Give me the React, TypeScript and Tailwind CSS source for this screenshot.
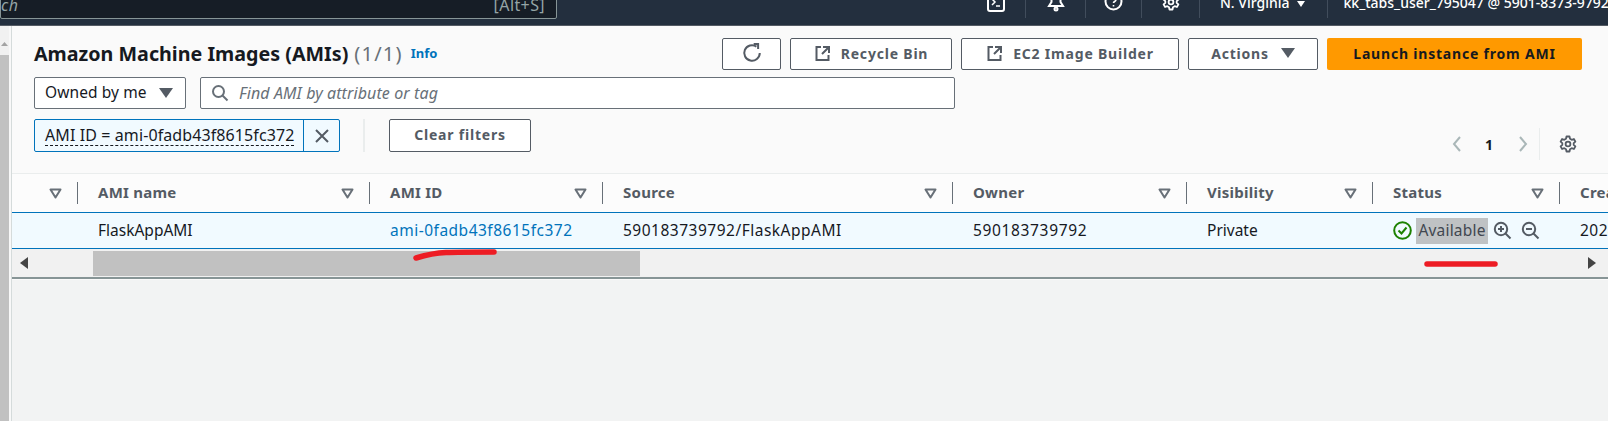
import type { ReactNode } from "react";

const columns = [
  { label: "", width: "w-[66px]", cell: "", tracking: "" },
  { label: "AMI name", width: "w-[292px]", cell: "FlaskAppAMI", tracking: "" },
  { label: "AMI ID", width: "w-[233px]", cell: "ami-0fadb43f8615fc372", tracking: "tracking-[0.5px]" },
  { label: "Source", width: "w-[350px]", cell: "590183739792/FlaskAppAMI", tracking: "tracking-[0.5px]" },
  { label: "Owner", width: "w-[234px]", cell: "590183739792", tracking: "tracking-[0.65px]" },
  { label: "Visibility", width: "w-[186px]", cell: "Private", tracking: "" },
  { label: "Status", width: "w-[187px]", cell: "", tracking: "" },
  { label: "Created", width: "w-[200px]", cell: "2024", tracking: "tracking-[0.5px]" },
];

function ExternalIcon() {
  return (
    <svg width="18" height="18" viewBox="0 0 18 18" fill="none" stroke="#545b64" strokeWidth="2">
      <path d="M7 3H2.500v13h12v-5" />
      <path d="M9 3h6v6M15 3L8 10" />
    </svg>
  );
}

function Caret() {
  return (
    <svg width="14" height="10" viewBox="0 0 14 10" fill="#545b64">
      <path d="M0 0h14L7 10z" />
    </svg>
  );
}

function SortIcon() {
  return (
    <svg width="13" height="11" viewBox="0 0 13 11" fill="none" stroke="#687078" strokeWidth="2" strokeLinejoin="round">
      <path d="M1.500 1.500h10L6.500 9.500z" />
    </svg>
  );
}

function GearIcon({ size, color }: { size: number; color: string }) {
  return (
    <svg width={size} height={size} viewBox="0 0 18 18" fill="none" stroke={color} strokeWidth="1.8" strokeLinejoin="round">
      <path d="M7.500 1.500h3l.5 2.300 1.700 1 2.200-.8 1.500 2.600-1.700 1.500v1.800l1.700 1.500-1.500 2.600-2.200-.8-1.700 1-.5 2.300h-3l-.5-2.300-1.700-1-2.200.8-1.500-2.600 1.700-1.500V8.100L1.600 6.600l1.500-2.600 2.200.8 1.700-1z" />
      <circle cx="9" cy="9" r="2.400" />
    </svg>
  );
}

function ZoomIcon({ plus }: { plus?: boolean }) {
  return (
    <svg width="19" height="19" viewBox="0 0 19 19" fill="none" stroke="#545b64" strokeWidth="2">
      <circle cx="8" cy="8" r="6.200" />
      <path d="M12.500 12.500L17.500 17.500" />
      <path d="M5 8h6" />
      {plus && <path d="M8 5v6" />}
    </svg>
  );
}

function Button({ children, className }: { children: ReactNode; className: string }) {
  return (
    <div className={`flex h-[32px] shrink-0 items-center justify-center rounded-[2px] border border-[#545b64] bg-white pb-[2px] text-[14px] font-bold tracking-[0.8px] whitespace-nowrap text-[#545b64] ${className}`}>
      {children}
    </div>
  );
}

function NavSep({ className }: { className: string }) {
  return <div className={`h-[18px] w-px bg-[#414d5c] ${className}`} />;
}

function TopNav() {
  return (
    <div className="flex h-[26px] overflow-hidden border-b border-[#545b64] bg-[#232f3e] text-white">
      <div className="-mt-[10px] flex h-[29px] w-[557px] shrink-0 items-center justify-between rounded-[2px] border border-[#879596] bg-[#161d26] pr-[11px] text-[16px] tracking-[0.4px] text-[#95a5a6]">
        <span className="italic">ch</span>
        <span>[Alt+S]</span>
      </div>
      <div className="flex flex-1 items-start pl-[429px]">
        <svg className="-mt-[5px]" width="20" height="18" viewBox="0 0 20 18" fill="none" stroke="#ffffff" strokeWidth="2">
          <rect x="2" y="1" width="16" height="15" rx="2" />
          <path d="M6 4l3 3-3 3M10 11h4" strokeWidth="1.500" />
        </svg>
        <NavSep className="ml-[19px]" />
        <svg className="ml-[21px] -mt-[7px]" width="18" height="19" viewBox="0 0 18 19" fill="none" stroke="#ffffff" strokeWidth="2">
          <path d="M9 1c3 0 4.500 2 4.500 5v3l2.500 4H2l2.500-4V6C4.500 3 6 1 9 1z" />
          <circle cx="9" cy="16" r="1.500" />
        </svg>
        <NavSep className="ml-[20px]" />
        <svg className="ml-[18px] -mt-[8px]" width="19" height="19" viewBox="0 0 19 19" fill="none" stroke="#ffffff" strokeWidth="2">
          <circle cx="9.500" cy="9.500" r="8" />
          <path d="M7 7.500c0-3 5-3 5 0 0 2-2.500 2-2.500 3.500M9.500 13v1.500" strokeWidth="1.600" />
        </svg>
        <NavSep className="ml-[18px]" />
        <div className="ml-[20px] -mt-[7px]">
          <GearIcon size={18} color="#ffffff" />
        </div>
        <NavSep className="ml-[19px]" />
        <span className="-mt-[8px] ml-[20px] text-[14px] font-medium whitespace-nowrap">N. Virginia</span>
        <svg className="ml-[7px] mt-[1px]" width="8" height="6" viewBox="0 0 8 6" fill="#ffffff">
          <path d="M0 0h8L4 6z" />
        </svg>
        <NavSep className="ml-[22px]" />
        <span className="-mt-[8px] ml-[16px] text-[14px] font-medium whitespace-nowrap">kk_tabs_user_795047 @ 5901-8373-9792</span>
      </div>
    </div>
  );
}

function HeaderRow() {
  return (
    <div className="flex items-start">
      <div className="flex h-[32px] w-[710px] shrink-0 items-center pl-[22px]">
        <h1 className="text-[19.7px] font-bold whitespace-nowrap text-[#16191f]">Amazon Machine Images (AMIs)</h1>
        <span className="ml-[6px] text-[20px] tracking-[1.2px] text-[#687078]">(1/1)</span>
        <span className="ml-[8px] text-[13px] font-bold text-[#0073bb]">Info</span>
      </div>
      <div className="flex gap-[9px]">
        <Button className="w-[59px]">
          <svg width="20" height="20" viewBox="0 0 18 18" fill="none" stroke="#545b64" strokeWidth="1.800">
            <path d="M13 3.200A7 7 0 1 0 16 9" />
            <path d="M10.500 1h4v4.500" />
          </svg>
        </Button>
        <Button className="w-[162px] gap-[9px]">
          <ExternalIcon />
          Recycle Bin
        </Button>
        <Button className="w-[218px] gap-[9px]">
          <ExternalIcon />
          EC2 Image Builder
        </Button>
        <Button className="w-[130px] gap-[12px]">
          Actions
          <Caret />
        </Button>
        <div className="flex h-[32px] w-[255px] shrink-0 items-center justify-center rounded-[2px] bg-[#ff9900] pb-[2px] text-[14px] font-bold tracking-[0.8px] whitespace-nowrap text-[#16191f]">
          Launch instance from AMI
        </div>
      </div>
    </div>
  );
}

function FilterRows() {
  return (
    <div className="pl-[22px]">
      <div className="mt-[7px] flex gap-[14px]">
        <div className="flex h-[32px] w-[152px] items-center justify-between rounded-[2px] border border-[#687078] bg-white pl-[10px] pr-[12px] text-[15.5px] tracking-[0.1px] whitespace-nowrap text-[#16191f]">
          Owned by me
          <Caret />
        </div>
        <div className="flex h-[32px] w-[755px] items-center gap-[10px] rounded-[2px] border border-[#687078] bg-white pl-[10px] text-[16px] tracking-[0.1px] italic text-[#687078]">
          <svg width="18" height="18" viewBox="0 0 18 18" fill="none" stroke="#687078" strokeWidth="2">
            <circle cx="7.500" cy="7.500" r="5.500" />
            <path d="M11.500 11.500L16.500 16.500" />
          </svg>
          Find AMI by attribute or tag
        </div>
      </div>
      <div className="mt-[10px] flex h-[33px] items-stretch">
        <div className="flex w-[306px] rounded-[2px] border border-[#0073bb] bg-[#f1faff] text-[16px] tracking-[0.1px] text-[#16191f]">
          <div className="flex w-[269px] items-center border-r border-[#0073bb] pl-[10px]">
            <span className="border-b border-dashed border-[#16191f] leading-[19px] whitespace-nowrap">AMI ID = ami-0fadb43f8615fc372</span>
          </div>
          <div className="flex flex-1 items-center justify-center">
            <svg width="16" height="16" viewBox="0 0 16 16" fill="none" stroke="#545b64" strokeWidth="2">
              <path d="M2 2l12 12M14 2L2 14" />
            </svg>
          </div>
        </div>
        <div className="ml-[23px] w-[2px] bg-[#eaeded]" />
        <Button className="ml-[24px] h-[33px] w-[142px]">Clear filters</Button>
        <div className="ml-auto flex h-[32px] items-center self-start pr-[31px] mt-[9px]">
          <svg width="10" height="16" viewBox="0 0 10 16" fill="none" stroke="#aab7b8" strokeWidth="2">
            <path d="M8 1L2 8l6 7" />
          </svg>
          <span className="ml-[23px] text-[14px] font-bold text-[#16191f]">1</span>
          <svg className="ml-[25px]" width="10" height="16" viewBox="0 0 10 16" fill="none" stroke="#aab7b8" strokeWidth="2">
            <path d="M2 1l6 7-6 7" />
          </svg>
          <div className="ml-[11px] h-[32px] w-px bg-[#eaeded]" />
          <div className="ml-[19px]">
            <GearIcon size={18} color="#545b64" />
          </div>
        </div>
      </div>
    </div>
  );
}

function AmiTable() {
  return (
    <div className="relative mt-[21px]">
      <div className="flex h-[39px] overflow-hidden border-t border-[#eaeded] bg-[#fcfcfc]">
        {columns.map((col) => (
          <div key={col.label} className={`flex shrink-0 items-center justify-between ${col.width} pl-[20px]`}>
            <span className="pb-[2px] text-[15px] font-bold tracking-[0.25px] whitespace-nowrap text-[#545b64]">{col.label}</span>
            {col.label !== "Created" && (
              <div className="flex items-center gap-[15px]">
                <SortIcon />
                <div className="h-[22px] w-px bg-[#687078]" />
              </div>
            )}
          </div>
        ))}
      </div>
      <div className="flex h-[37px] overflow-hidden border-y border-[#0073bb] bg-[#f1faff] text-[15.5px] text-[#16191f]">
        {columns.map((col) => (
          <div key={col.label} className={`flex shrink-0 items-center ${col.width} ${col.tracking} pl-[20px] whitespace-nowrap`}>
            {col.label === "AMI ID" ? (
              <span className="text-[#0073bb]">{col.cell}</span>
            ) : col.label === "Status" ? (
              <div className="flex items-center">
                <svg width="19" height="19" viewBox="0 0 19 19" fill="none" stroke="#1d8102" strokeWidth="2">
                  <circle cx="9.500" cy="9.500" r="8.300" />
                  <path d="M5.500 9.500l3 3 5-6" />
                </svg>
                <span className="ml-[4px] flex h-[26px] w-[72px] items-center justify-center bg-[#bfc2c4] tracking-[0.2px] text-[#414750]">Available</span>
                <span className="ml-[5px]">
                  <ZoomIcon plus />
                </span>
                <span className="ml-[9px]">
                  <ZoomIcon />
                </span>
              </div>
            ) : (
              col.cell
            )}
          </div>
        ))}
      </div>
      <div className="flex h-[30px] items-center border-b-2 border-[#879596] bg-[#f1f1f1] pl-[8px] pr-[12px]">
        <svg width="8" height="12" viewBox="0 0 8 12" fill="#444444">
          <path d="M8 0v12L0 6z" />
        </svg>
        <div className="ml-[65px] h-[25px] w-[547px] bg-[#c1c1c1]" />
        <svg className="ml-auto" width="8" height="12" viewBox="0 0 8 12" fill="#444444">
          <path d="M0 0v12l8-6z" />
        </svg>
      </div>
      {/* hand-drawn red marks sitting on top of the screenshot */}
      <svg className="absolute left-0 top-0" width="1596" height="110" fill="none" stroke="#ed1c24" strokeWidth="5.500" strokeLinecap="round">
        <path d="M404 85c10-3 18-5 30-5.500s30-.5 48-.5" />
        <path d="M1415 91h68" />
      </svg>
    </div>
  );
}

export default function App() {
  return (
    <div className="h-[421px] w-[1608px] overflow-hidden bg-[#f2f3f3] font-['Noto_Sans',sans-serif]">
      <TopNav />
      <div className="flex h-[395px]">
        <div className="flex w-[9px] shrink-0 flex-col bg-[#f1f1f1]">
          <div className="flex h-[29px] items-center justify-center pt-[6px]">
            <svg width="7" height="4" viewBox="0 0 7 4" fill="#a3a3a3">
              <path d="M0 4h7L3.500 0z" />
            </svg>
          </div>
          <div className="flex-1 bg-[#c1c1c1]" />
        </div>
        <div className="w-[3px] shrink-0 border-r border-[#d5dbdb] bg-[#f8f8f8]" />
        <div className="min-w-0 flex-1">
          <div className="bg-[#fafafa] pt-[12px] pb-px">
            <HeaderRow />
            <FilterRows />
            <AmiTable />
          </div>
        </div>
      </div>
    </div>
  );
}
